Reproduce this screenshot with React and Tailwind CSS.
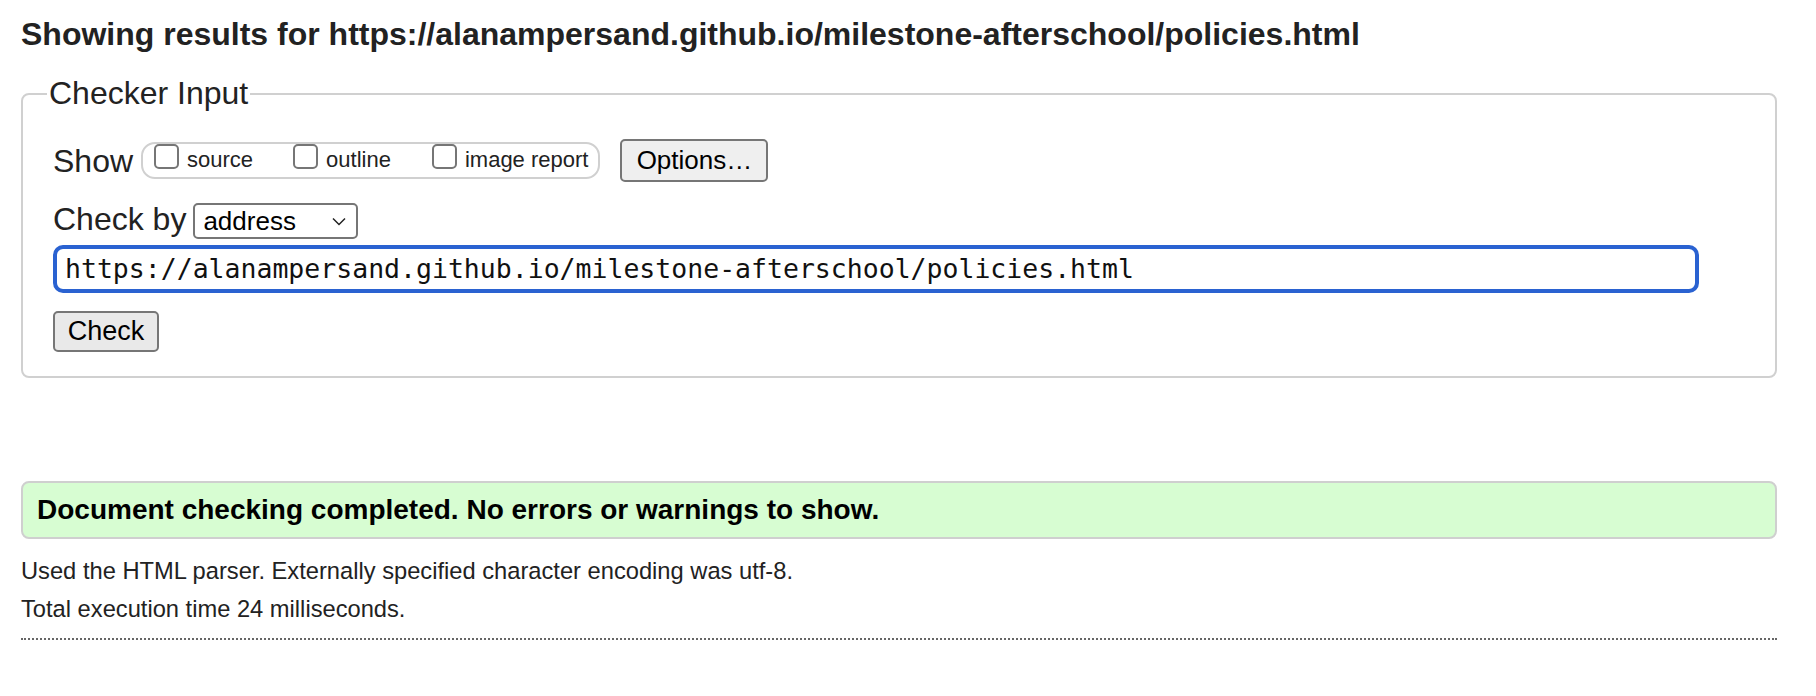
import React from "react";

function Box({ label, className = "" }) {
  return (
    <div className={`flex items-start ${className}`}>
      <span className="block w-[25px] h-[25px] border-2 border-[#767676] rounded-[5px] bg-white shrink-0" />
      <span className="ml-[8px] pt-[4px] text-[22px] leading-[24px] text-[#222]">{label}</span>
    </div>
  );
}

export default function App() {
  return (
    <div className="pl-[21px] pr-[39px] pt-[16px] font-['Liberation_Sans',Arial,sans-serif] text-[#222] bg-white min-h-[696px]">
      <h2 className="text-[32px] font-bold leading-[37px] text-[#222]">
        Showing results for https://alanampersand.github.io/milestone-afterschool/policies.html
      </h2>

      <fieldset className="mt-[22px] border-2 border-[#d0d0d0] rounded-[8px] px-[30px] pb-[24px]">
        <legend className="-ml-[6px] px-[2px] text-[32px] leading-[37px] text-[#222]">Checker Input</legend>

        <div className="pt-[27px] flex flex-col">
          <div className="flex items-center h-[43px]">
            <span className="text-[32px] leading-[36px]">Show</span>
            <div className="ml-[8px] flex items-start h-[37px] border-2 border-[#d0d0d0] rounded-[14px] pl-[11px] pr-[10px]">
              <Box label="source" />
              <Box label="outline" className="ml-[40px]" />
              <Box label="image report" className="ml-[41px]" />
            </div>
            <div className="ml-[20px] flex items-center justify-center w-[148px] h-[43px] bg-[#efefef] border-2 border-[#767676] rounded-[5px] text-[26px] text-black">
              Options…
            </div>
          </div>

          <div className="mt-[20px] flex items-baseline">
            <span className="text-[32px] leading-[34px]">Check by</span>
            <div className="ml-[7px] flex items-baseline w-[165px] h-[36px] border-2 border-[#767676] rounded-[5px] pl-[8px] pr-[10px] text-[26px] leading-[32px] text-black bg-white">
              <span>address</span>
              <svg className="ml-auto self-center" width="14" height="9" viewBox="0 0 14 9" fill="none">
                <path d="M1 1.5 L7 7.5 L13 1.5" stroke="#222" strokeWidth="1.5" />
              </svg>
            </div>
          </div>

          <div className="mt-[6px] w-[1646px] h-[48px] border-4 border-[#2a62d1] rounded-[10px] pl-[8px] flex items-center font-['DejaVu_Sans_Mono',monospace] text-[26.5px] text-[#111]">
            https://alanampersand.github.io/milestone-afterschool/policies.html
          </div>

          <div className="mt-[18px] flex items-center justify-center w-[106px] h-[41px] bg-[#e9e9e9] border-2 border-[#767676] rounded-[5px] text-[27px] text-black">
            Check
          </div>
        </div>
      </fieldset>

      <div className="mt-[103px] h-[58px] border-2 border-[#cfcfcf] rounded-[8px] bg-[#d7fdd2] pl-[14px] flex items-center">
        <span className="text-[28px] font-bold text-black">Document checking completed. No errors or warnings to show.</span>
      </div>

      <p className="mt-[13px] text-[23.7px] leading-[38px] text-[#222]">
        Used the HTML parser. Externally specified character encoding was utf-8.
      </p>
      <p className="text-[23.7px] leading-[39px] text-[#222]">Total execution time 24 milliseconds.</p>
      <div className="mt-[9px] border-t-2 border-dotted border-[#666]" />
    </div>
  );
}
